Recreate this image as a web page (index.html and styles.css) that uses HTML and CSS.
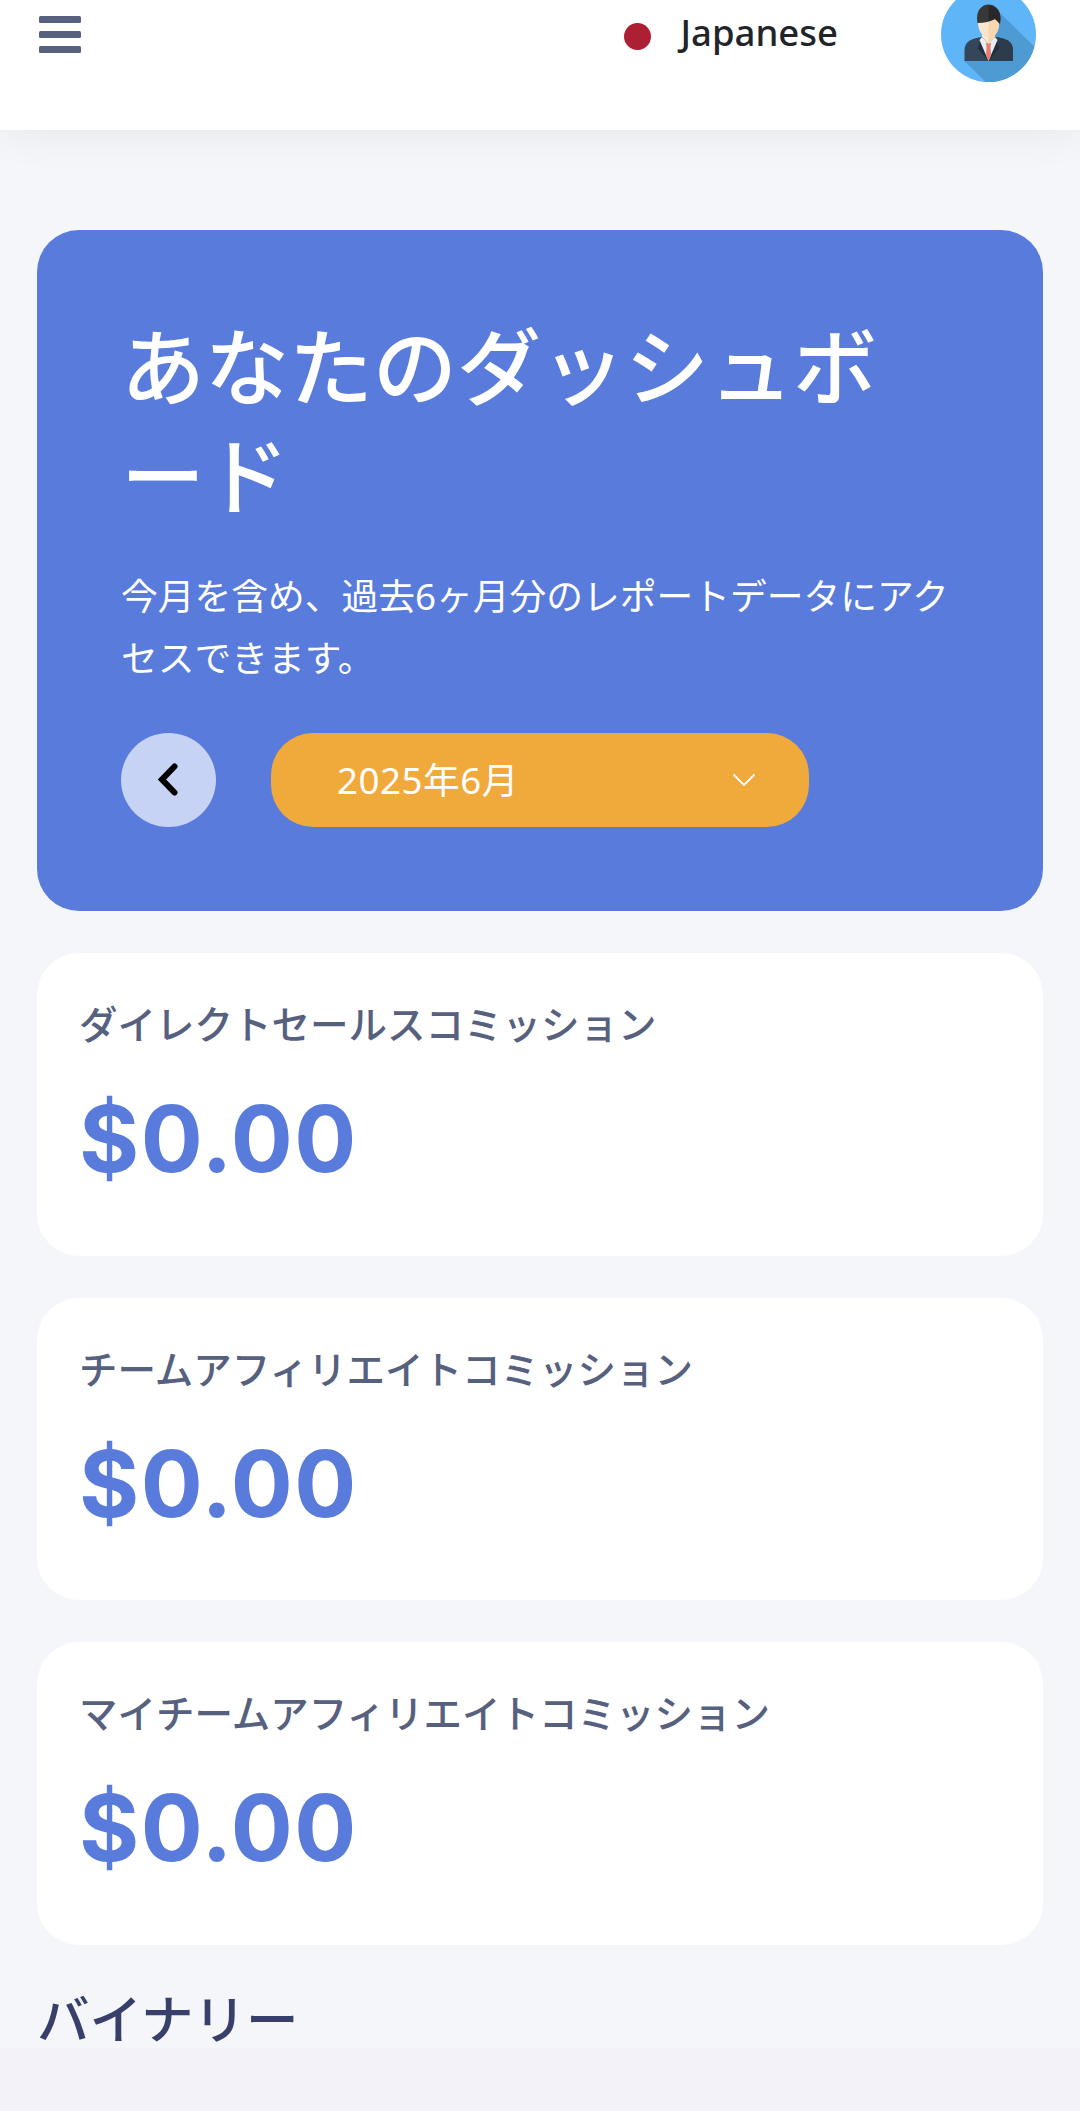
FILE: index.html
```html
<!DOCTYPE html>
<html lang="ja">
<head>
<meta charset="utf-8">
<title>ダッシュボード</title>
<link rel="stylesheet" href="styles.css">
</head>
<body>
<header class="topbar">
  <svg class="menu" width="42" height="38" viewBox="0 0 42 38"><rect width="42" height="7" rx="1.5"/><rect y="15" width="42" height="7" rx="1.5"/><rect y="30" width="42" height="7" rx="1.5"/></svg>
  <div class="language">
    <span class="flag"></span>
    <span>Japanese</span>
  </div>
  <svg class="avatar" width="95" height="95" viewBox="0 0 95 95">
    <defs><clipPath id="disc"><circle cx="47.5" cy="47.5" r="47.5"/></clipPath></defs>
    <g clip-path="url(#disc)">
      <rect width="95" height="95" fill="#5eb5f7"/>
      <path d="M57 24 L105 71 V110 H60 L23.5 74 L47 50Z" fill="#4e9ad2"/>
      <path d="M23.500 74V63C23.500 54 32 51 41 50H54C64 51 72 54 72 63V74Z" fill="#34465a"/>
      <path d="M47.500 52L54 50C64 51 72 54 72 63V74H47.500Z" fill="#2d3b4d"/>
      <path d="M41 50L47.500 74 36.500 61Z M54 50L47.500 74 58.500 61Z" fill="#222f40"/>
      <path d="M41 50L47.500 57 54 50 56.500 53 47.500 74 38.500 53Z" fill="#e9edf1"/>
      <path d="M45 56H50L49.500 60 50 68 47.500 74 45 68 45.500 60Z" fill="#e67e70"/>
      <path d="M37 32H58V37C58 44 54 48 54 48V50L47.500 57 41 50V47C37 43 37 37 37 32Z" fill="#fde6cb"/>
      <path d="M47.500 30H58V37C58 44 54 48 54 48V50L47.500 57Z" fill="#f8d6b0"/>
      <path d="M36.500 36C32 11 63 12 59 35L54 32Q47 36 36.500 36Z" fill="#393838"/>
      <path d="M47.500 19C58 19 61 27 59 37L54 32 47.500 34Z" fill="#292829"/>
    </g>
  </svg>
</header>
<main class="content">
  <section class="hero">
    <h1 class="hero-title">あなたのダッシュボード</h1>
    <p class="hero-text">今月を含め、過去6ヶ月分のレポートデータにアクセスできます。</p>
    <div class="controls">
      <button class="prev" aria-label="前の月"><svg width="22" height="36" viewBox="0 0 22 36"><path d="M16.500 4.500L4 17.500 16.500 30.500" fill="none" stroke="#000" stroke-width="6" stroke-linecap="round" stroke-linejoin="miter"/></svg></button>
      <div class="month">
        <span>2025年6月</span>
        <svg width="24" height="16" viewBox="0 0 24 16"><path d="M1.500 2.500L12 13 22.500 2.500" fill="none" stroke="#fff" stroke-width="1.800"/></svg>
      </div>
    </div>
  </section>
  <section class="card"><h2 class="card-label">ダイレクトセールスコミッション</h2><div class="amount">$0.00</div></section>
  <section class="card"><h2 class="card-label">チームアフィリエイトコミッション</h2><div class="amount">$0.00</div></section>
  <section class="card"><h2 class="card-label">マイチームアフィリエイトコミッション</h2><div class="amount">$0.00</div></section>
  <h2 class="section-title">バイナリー</h2>
</main>
<footer class="footer"></footer>
</body>
</html>
```
FILE: styles.css
```css
* { box-sizing: border-box; }
body {
  margin: 0;
  height: 2111px;
  overflow: hidden;
  display: flex;
  flex-direction: column;
  background: #f4f6fa;
  color: #212529;
  font-family: "Noto Sans", "Noto Sans CJK JP", sans-serif;
  font-size: 36.75px;
}
h1, h2, p { margin: 0; }
svg { display: block; flex: none; }

.topbar {
  flex: none;
  height: 130px;
  padding: 0 44px 0 39px;
  display: flex;
  align-items: flex-start;
  background: #fff;
  box-shadow: 0 2px 42px rgba(0, 0, 0, .065);
}
.menu { margin-top: 16px; fill: #56607f; }
.language {
  display: flex;
  align-items: center;
  gap: 30px;
  height: 64px;
  margin-left: auto;
  margin-right: 103px;
  font-size: 36.5px;
  font-weight: 500;
}
.flag {
  width: 27px;
  height: 27px;
  margin-top: 9px;
  border-radius: 50%;
  background: #ad2034;
}
.avatar { margin-top: -13px; }

.content {
  flex: none;
  height: 1918px;
  padding: 100px 37px 0;
}
.hero {
  height: 681px;
  padding: 82px 84px 84px;
  border-radius: 42px;
  background: #587bdc;
  color: #fff;
}
.hero-title {
  font-size: 84px;
  line-height: 109px;
  font-weight: 500;
}
.hero-text {
  width: 840px;
  margin-top: 35px;
  line-height: 62px;
}
.controls {
  display: flex;
  gap: 55px;
  margin-top: 44px;
}
.prev {
  width: 95px;
  height: 94px;
  padding: 0;
  border: 0;
  border-radius: 50%;
  display: flex;
  align-items: center;
  justify-content: center;
  background: #c7d3f4;
}
.month {
  width: 538px;
  height: 94px;
  padding: 0 53px 0 66px;
  border-radius: 42px;
  display: flex;
  align-items: center;
  justify-content: space-between;
  background: #f0a93b;
  line-height: 94px;
  letter-spacing: .5px;
}

.card {
  height: 302.500px;
  margin-top: 42px;
  padding: 42px;
  border-radius: 42px;
  background: #fff;
}
.card-label {
  font-size: 38.500px;
  line-height: 58px;
  font-weight: 500;
  color: #56607f;
}
.amount {
  margin-top: 31px;
  font-family: Inter, sans-serif;
  font-size: 92px;
  line-height: 110px;
  font-weight: 650;
  letter-spacing: 1.4px;
  color: #587bdc;
}
.section-title {
  margin-top: 42px;
  font-size: 52.500px;
  line-height: 63px;
  font-weight: 500;
  color: #383f6b;
}
.footer { flex: 1; background: #f2f2f8; }
```
